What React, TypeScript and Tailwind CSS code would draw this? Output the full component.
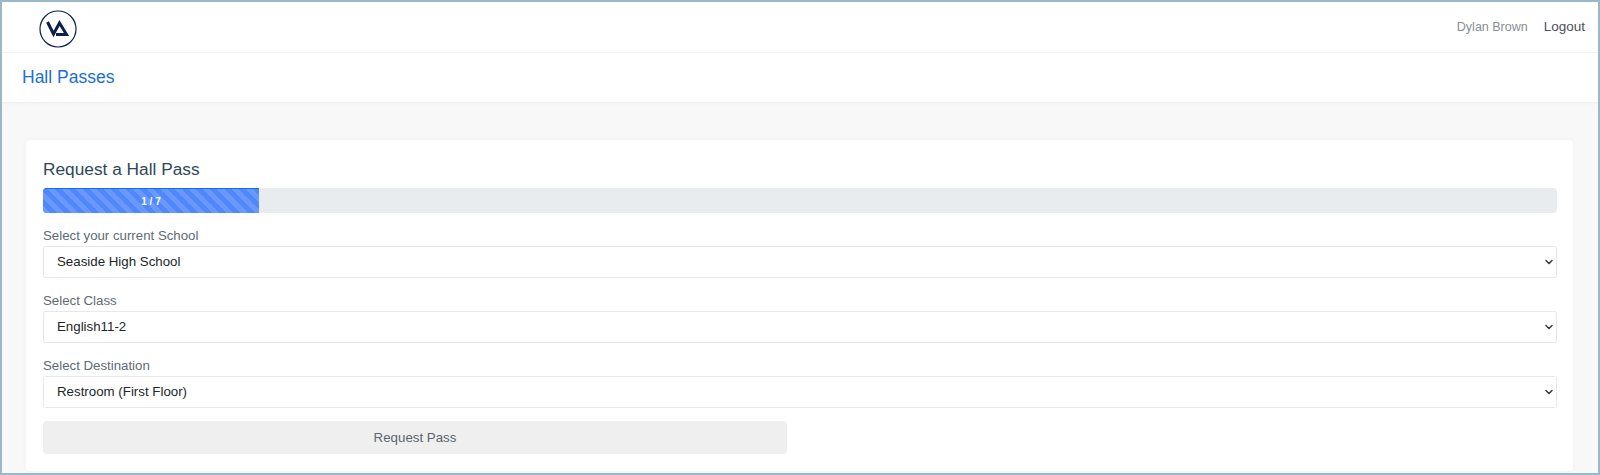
import { ChevronDown } from "lucide-react";

const fields = [
	{ label: "Select your current School", value: "Seaside High School" },
	{ label: "Select Class", value: "English11-2" },
	{ label: "Select Destination", value: "Restroom (First Floor)" },
];

function Logo() {
	return (
		<svg width="38" height="38" viewBox="0 0 38 38" fill="none" className="mt-[3px]">
			<circle cx="19" cy="19" r="18" stroke="#0b1f4f" strokeWidth="1.2" />
			<path
				d="M8.5 12 L14.5 24 L20.5 13 L27.5 24.5 H17"
				stroke="#0b1f4f"
				strokeWidth="3"
			/>
		</svg>
	);
}

function App() {
	return (
		<div className="h-[475px] flex flex-col overflow-hidden border-2 border-[#9ab8c8] bg-[#f8f8f8] font-['Liberation_Sans',Arial,sans-serif]">
			<header className="h-[51px] shrink-0 bg-white border-b border-[#f4f4f4] flex items-center justify-between pl-[37px] pr-[13px]">
				<Logo />
				<div className="flex items-center gap-[16px]">
					<span className="text-[12.5px] text-[#868e96]">Dylan Brown</span>
					<a className="text-[13.5px] text-[#495057]">Logout</a>
				</div>
			</header>
			<div className="h-[49px] shrink-0 bg-white shadow-[0_1px_3px_rgba(0,0,0,0.05)] flex items-center pl-[20px]">
				<span className="text-[17.5px] text-[#1b6fd8]">Hall Passes</span>
			</div>
			<main className="flex-1 min-h-0 pt-[38px] pl-[24px] pr-[25px]">
				<section className="bg-white rounded-[4px] h-[331px] pt-[19px] pl-[17px] pr-[16px] shadow-[0_0_6px_rgba(0,0,0,0.03)]">
					<h1 className="text-[17.3px] leading-[20px] text-[#2f4858]">Request a Hall Pass</h1>
					<div className="mt-[9px] h-[25px] rounded-[4px] bg-[#e9ecef] overflow-hidden">
						<div className="h-full w-[216px] border-t border-[#0d6efd] flex items-center justify-center text-[10px] font-bold text-white bg-[#5088fb] bg-[repeating-linear-gradient(45deg,#6b98fb_0,#6b98fb_5px,#5088fb_5px,#5088fb_10px)]">
							1 / 7
						</div>
					</div>
					<div className="mt-[14px] flex flex-col gap-[14px]">
						{fields.map((f) => (
							<label key={f.label} className="block">
								<span className="block text-[13.25px] leading-[17px] mb-[2px] text-[#5c6b75]">{f.label}</span>
								<span className="relative block">
									<select
										defaultValue={f.value}
										className="block w-full h-[32px] pl-[13px] pr-[24px] appearance-none text-[13.3px] text-[#212529] bg-white border border-[#e6e8ea] rounded-[2px] outline-none"
									>
										<option>{f.value}</option>
									</select>
									<ChevronDown
										size={12}
										strokeWidth={3}
										className="absolute right-[2px] top-[10px] text-[#343a40] pointer-events-none"
									/>
								</span>
							</label>
						))}
					</div>
					<button className="mt-[13px] block w-[744px] h-[33px] rounded-[4px] bg-[#efefef] text-[13.3px] text-[#5c6670]">
						Request Pass
					</button>
				</section>
			</main>
		</div>
	);
}

export default App;
